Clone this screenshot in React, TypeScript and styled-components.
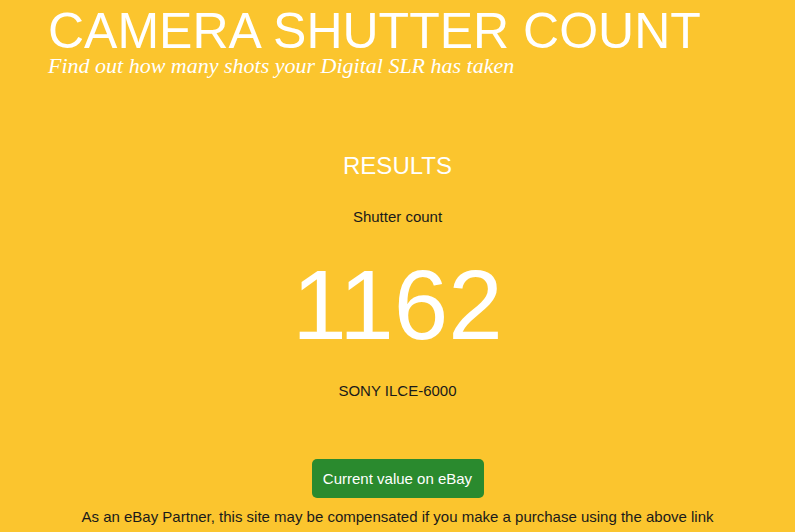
import React from "react";
import styled, { createGlobalStyle } from "styled-components";

const GlobalStyle = createGlobalStyle`
  html, body {
    margin: 0;
    padding: 0;
    background: #fbc52e;
  }
  body {
    font-family: "Liberation Sans", Arial, sans-serif;
    min-height: 100vh;
  }
`;

const Page = styled.div`
  display: flex;
  flex-direction: column;
  min-height: 100vh;
  background: #fbc52e;
`;

const Header = styled.header`
  padding: 7px 0 0 48px;
`;

const Title = styled.h1`
  margin: 0;
  font-family: "Liberation Sans", Arial, sans-serif;
  font-weight: normal;
  font-size: 50px;
  line-height: 48px;
  color: #ffffff;
`;

const Subtitle = styled.div`
  font-family: "Liberation Serif", Georgia, serif;
  font-style: italic;
  font-size: 22px;
  line-height: 22px;
  color: #ffffff;
`;

const Results = styled.main`
  display: flex;
  flex-direction: column;
  align-items: center;
  text-align: center;
  padding-top: 75px;
`;

const Heading = styled.h2`
  margin: 0;
  font-weight: normal;
  font-size: 24px;
  line-height: 28px;
  color: #ffffff;
`;

const Label = styled.div<{ $gap: number }>`
  margin-top: ${(p) => p.$gap}px;
  font-size: 15px;
  line-height: 20px;
  color: #1a1a1a;
`;

const Count = styled.div`
  margin-top: 23px;
  font-size: 98px;
  line-height: 110px;
  color: #ffffff;
`;

const EbayButton = styled.a`
  display: inline-flex;
  align-items: center;
  justify-content: center;
  margin-top: 58px;
  width: 172px;
  height: 39px;
  box-sizing: border-box;
  background: #2a8a2e;
  border-radius: 5px;
  color: #ffffff;
  font-size: 15px;
  text-decoration: none;
`;

const Note = styled.div`
  margin-top: 9px;
  font-size: 15px;
  line-height: 20px;
  color: #1a1a1a;
`;

export default function App() {
  return (
    <Page>
      <GlobalStyle />
      <Header>
        <Title>CAMERA SHUTTER COUNT</Title>
        <Subtitle>Find out how many shots your Digital SLR has taken</Subtitle>
      </Header>
      <Results>
        <Heading>RESULTS</Heading>
        <Label $gap={27}>Shutter count</Label>
        <Count>1162</Count>
        <Label $gap={21}>SONY ILCE-6000</Label>
        <EbayButton href="#">Current value on eBay</EbayButton>
        <Note>
          As an eBay Partner, this site may be compensated if you make a
          purchase using the above link
        </Note>
      </Results>
    </Page>
  );
}
